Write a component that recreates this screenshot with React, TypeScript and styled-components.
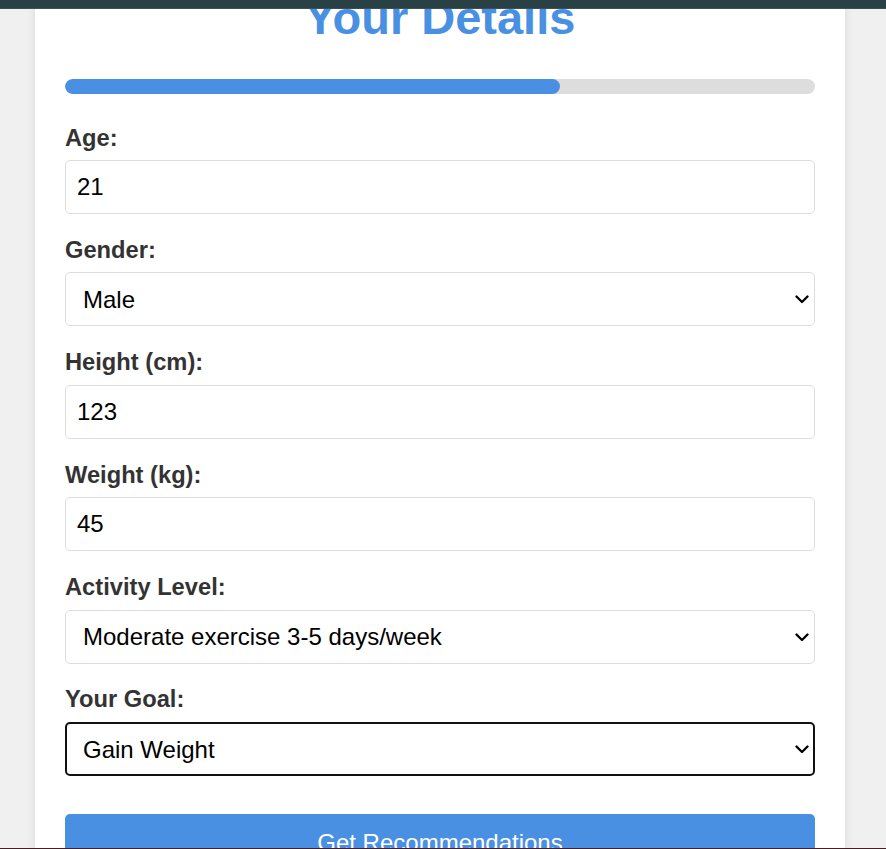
import React from "react";
import styled, { createGlobalStyle } from "styled-components";

const GlobalStyle = createGlobalStyle`
  html, body {
    margin: 0;
    padding: 0;
    background: #f0f0f0;
    font-family: "Liberation Sans", Arial, sans-serif;
  }
  * { box-sizing: border-box; }
`;

const Frame = styled.div`
  height: 849px;
  display: flex;
  flex-direction: column;
  overflow: hidden;
`;

const TopBar = styled.div`
  flex: 0 0 9px;
  background: #294145;
  border-bottom: 1px solid #3b5255;
`;

const Viewport = styled.div`
  flex: 1 1 auto;
  overflow: hidden;
`;

const BottomLine = styled.div`
  flex: 0 0 1px;
  background: #4a1d24;
`;

const Card = styled.div`
  width: 810px;
  margin: -43px 0 0 35px;
  padding: 30px 30px 40px;
  background: #ffffff;
  box-shadow: 0 0 10px rgba(0, 0, 0, 0.1);
  border-radius: 8px;
`;

const Title = styled.h1`
  margin: -5px 0 35px;
  font-size: 47px;
  line-height: 53px;
  font-weight: 700;
  color: #4a90e2;
  text-align: center;
`;

const Track = styled.div`
  height: 15px;
  border-radius: 10px;
  background: #dddddd;
  overflow: hidden;
  margin-bottom: 30.5px;
`;

const Fill = styled.div`
  height: 100%;
  border-radius: 10px;
  background: #4a90e2;
`;

const Form = styled.form`
  display: flex;
  flex-direction: column;
`;

const Field = styled.div`
  display: flex;
  flex-direction: column;
  margin-bottom: 22.8px;
`;

const Label = styled.label`
  font-size: 23.7px;
  line-height: 27px;
  font-weight: 700;
  color: #333333;
  margin-bottom: 8.6px;
`;

const TextInput = styled.input`
  width: 100%;
  height: 54px;
  padding: 0 11px;
  font-family: "Liberation Sans", Arial, sans-serif;
  font-size: 24px;
  color: #000000;
  background: #ffffff;
  border: 1px solid #dddddd;
  border-radius: 5px;
  outline: none;
`;

const SelectWrap = styled.div`
  position: relative;
`;

const Select = styled.select<{ $focused?: boolean }>`
  appearance: none;
  -webkit-appearance: none;
  width: 100%;
  height: 54px;
  padding: 0 30px 0 ${(p) => (p.$focused ? 16 : 17)}px;
  font-family: "Liberation Sans", Arial, sans-serif;
  font-size: 24px;
  color: #000000;
  background: #ffffff;
  border: ${(p) => (p.$focused ? "2px solid #111111" : "1px solid #dddddd")};
  border-radius: 5px;
  outline: none;
`;

const Chevron = styled.svg`
  position: absolute;
  right: 6px;
  top: 50%;
  margin-top: -4px;
  pointer-events: none;
`;

const Button = styled.button`
  margin-top: 15.5px;
  width: 100%;
  padding: 15px;
  font-family: "Liberation Sans", Arial, sans-serif;
  font-size: 24px;
  color: #ffffff;
  background: #4a90e2;
  border: none;
  border-radius: 5px;
  cursor: pointer;
`;

type Opt = { value: string; label: string };

const DropDown: React.FC<{ id: string; value: string; options: Opt[]; focused?: boolean }> = ({
  id,
  value,
  options,
  focused,
}) => (
  <SelectWrap>
    <Select id={id} defaultValue={value} $focused={focused}>
      {options.map((o) => (
        <option key={o.value} value={o.value}>
          {o.label}
        </option>
      ))}
    </Select>
    <Chevron width="14" height="9" viewBox="0 0 14 9">
      <polyline points="1.5,1.5 7,7 12.5,1.5" fill="none" stroke="#000" strokeWidth="2.3" strokeLinecap="round" strokeLinejoin="round" />
    </Chevron>
  </SelectWrap>
);

export default function App() {
  const progress = 66;
  return (
    <>
      <GlobalStyle />
      <Frame>
        <TopBar />
        <Viewport>
          <Card>
            <Title>Your Details</Title>
            <Track>
              <Fill style={{ width: `${progress}%` }} />
            </Track>
            <Form onSubmit={(e) => e.preventDefault()}>
              <Field>
                <Label htmlFor="age">Age:</Label>
                <TextInput id="age" type="number" defaultValue="21" />
              </Field>
              <Field>
                <Label htmlFor="gender">Gender:</Label>
                <DropDown
                  id="gender"
                  value="male"
                  options={[
                    { value: "male", label: "Male" },
                    { value: "female", label: "Female" },
                  ]}
                />
              </Field>
              <Field>
                <Label htmlFor="height">Height (cm):</Label>
                <TextInput id="height" type="number" defaultValue="123" />
              </Field>
              <Field>
                <Label htmlFor="weight">Weight (kg):</Label>
                <TextInput id="weight" type="number" defaultValue="45" />
              </Field>
              <Field>
                <Label htmlFor="activity">Activity Level:</Label>
                <DropDown
                  id="activity"
                  value="moderate"
                  options={[
                    { value: "sedentary", label: "Sedentary (little or no exercise)" },
                    { value: "light", label: "Light exercise 1-3 days/week" },
                    { value: "moderate", label: "Moderate exercise 3-5 days/week" },
                    { value: "active", label: "Hard exercise 6-7 days/week" },
                  ]}
                />
              </Field>
              <Field>
                <Label htmlFor="goal">Your Goal:</Label>
                <DropDown
                  id="goal"
                  value="gain"
                  focused
                  options={[
                    { value: "lose", label: "Lose Weight" },
                    { value: "maintain", label: "Maintain Weight" },
                    { value: "gain", label: "Gain Weight" },
                  ]}
                />
              </Field>
              <Button type="submit">Get Recommendations</Button>
            </Form>
          </Card>
        </Viewport>
        <BottomLine />
      </Frame>
    </>
  );
}
